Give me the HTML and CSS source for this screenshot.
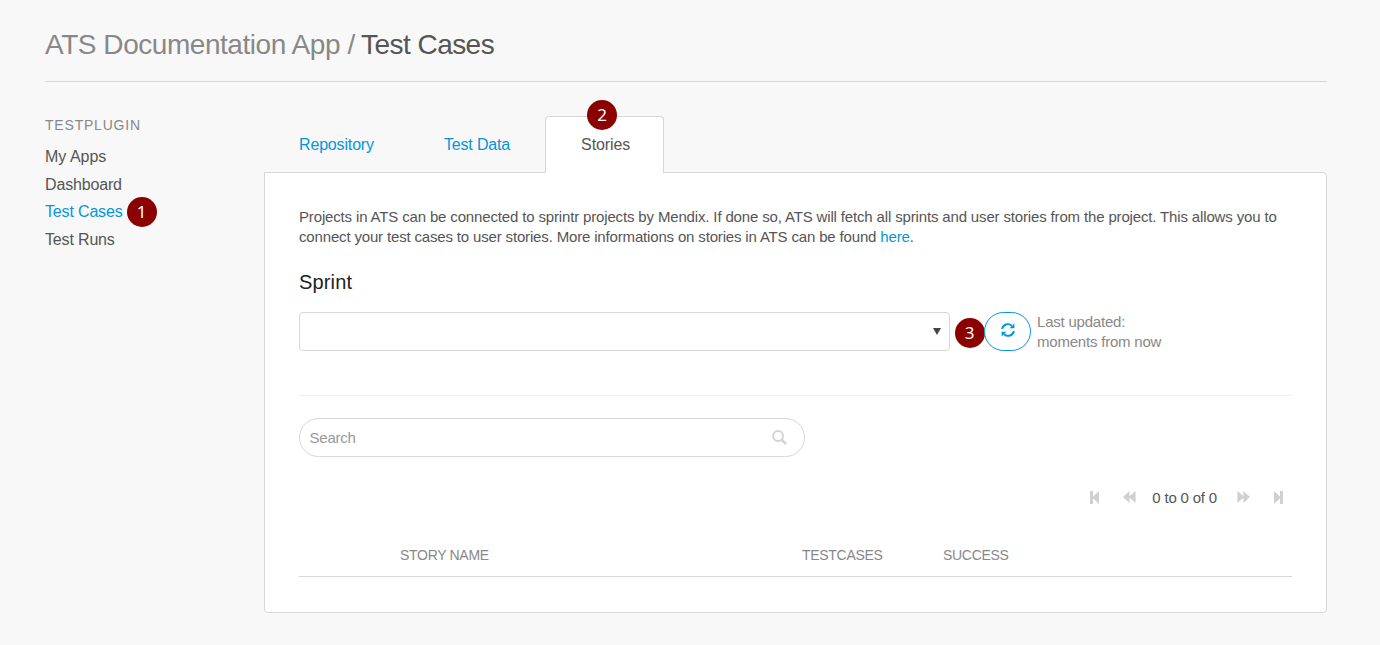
FILE: index.html
```html
<!DOCTYPE html>
<html lang="en">
<head>
<meta charset="utf-8">
<title>Test Cases</title>
<link rel="stylesheet" href="styles.css">
</head>
<body>
<header class="page-header"><h1><span class="app-name">ATS Documentation App /</span> <span class="page-name">Test Cases</span></h1></header>
<div class="layout">
  <nav class="sidebar">
    <h2>TESTPLUGIN</h2>
    <ul>
      <li><a class="wide">My Apps</a></li>
      <li><a>Dashboard</a></li>
      <li class="active"><a>Test Cases</a><span class="badge">1</span></li>
      <li><a>Test Runs</a></li>
    </ul>
  </nav>
  <main class="content">
    <div class="tabs">
      <a class="tab">Repository</a>
      <a class="tab">Test Data</a>
      <a class="tab current">Stories<span class="badge badge-tab">2</span></a>
    </div>
    <section class="panel">
      <p class="intro">Projects in ATS can be connected to sprintr projects by Mendix. If done so, ATS will fetch all sprints and user stories from the project. This allows you to<br><span>connect your test cases to user stories. More informations on stories in ATS can be found <a>here</a>.</span></p>
      <h3>Sprint</h3>
      <div class="sprint-row">
        <div class="select"><svg width="8" height="7" viewBox="0 0 8 7"><path d="M0 0H8L4 7Z" fill="#444"/></svg></div>
        <span class="badge">3</span>
        <button class="refresh"><svg width="14" height="14" viewBox="0 0 14 14"><g fill="none" stroke="#0595db" stroke-width="1.9"><path d="M1.1 6A5.8 5.8 0 0 1 10.8 2.8"/><path d="M12.9 8A5.8 5.8 0 0 1 3.2 11.2"/></g><path d="M13.4 0.4V5.3H8.5ZM.6 13.6V8.7H5.5Z" fill="#0595db"/></svg></button>
        <div class="updated">Last updated:<br>moments from now</div>
      </div>
      <hr>
      <div class="search"><span>Search</span><svg width="15" height="15" viewBox="0 0 15 15" fill="none" stroke="#d3d3d3"><circle cx="6.1" cy="6" r="4.9" stroke-width="2"/><path d="M9.6 9.6L14 14" stroke-width="2.6"/></svg></div>
      <div class="pager">
        <svg width="9" height="13" viewBox="0 0 9 13"><path d="M0 0H3V5.8L9 0V13L3 7.2V13H0Z"/></svg>
        <svg class="rew" width="13" height="12" viewBox="0 0 13 12"><path d="M0 6L6.5 0V5.2L12.6 0V12L6.5 6.8V12Z"/></svg>
        <span>0 to 0 of 0</span>
        <svg class="fwd" width="13" height="12" viewBox="0 0 13 12"><path d="M13 6L6.5 0V5.2L.4 0V12L6.5 6.8V12Z"/></svg>
        <svg width="9" height="13" viewBox="0 0 9 13"><path d="M9 0H6V5.8L0 0V13L6 7.2V13H9Z"/></svg>
      </div>
      <div class="thead"><span></span><span>STORY NAME</span><span>TESTCASES</span><span>SUCCESS</span></div>
    </section>
  </main>
</div>
</body>
</html>
```
FILE: styles.css
```css
* { box-sizing: border-box; }
body { margin: 0; padding: 0 53px 0 45px; background: #f8f8f8; color: #555; font: 15px/20px "Liberation Sans", Arial, sans-serif; }
h1, h2, h3, p, ul { margin: 0; padding: 0; font-weight: normal; }
svg { display: block; }
.page-header { height: 82px; padding-top: 29px; border-bottom: 1px solid #d7d7d7; }
h1 { font-size: 28px; line-height: 32px; white-space: nowrap; letter-spacing: -0.45px; }
.app-name { color: #888; }
.page-name { color: #555; margin-left: -1px; letter-spacing: -0.55px; }
.layout { display: flex; }
.sidebar { width: 219px; padding-top: 33px; }
.sidebar h2 { font-size: 14px; line-height: 20px; letter-spacing: 0.8px; color: #888; margin-bottom: 8px; }
.sidebar ul { list-style: none; }
.sidebar li { height: 27.7px; line-height: 28px; font-size: 16px; letter-spacing: -0.16px; display: flex; align-items: center; gap: 4px; }
.sidebar .wide { letter-spacing: 0; }
.active a, .intro a { color: #0595db; }
.badge { width: 30px; height: 30px; border-radius: 50%; background: #8b0000; color: #fff; font: 17px/29px "Noto Sans", sans-serif; letter-spacing: 0; text-align: center; flex: none; }
.content { width: 1063px; padding-top: 34px; }
.tabs { display: flex; height: 57px; position: relative; z-index: 1; margin-bottom: -1px; }
.tab { padding: 19px 35px; line-height: 20px; font-size: 16px; letter-spacing: -0.16px; color: #0595db; }
.current { position: relative; width: 119px; height: 57px; padding: 18px 35px; background: #fff; border: 1px solid #d7d7d7; border-bottom: 0; border-radius: 4px 4px 0 0; color: #555; letter-spacing: -0.08px; }
.badge-tab { position: absolute; left: 41px; top: -17px; }
.panel { height: 441px; padding: 34px; background: #fff; border: 1px solid #d7d7d7; border-radius: 0 4px 4px 4px; }
.intro { white-space: nowrap; letter-spacing: -0.152px; }
.intro span { letter-spacing: -0.162px; }
h3 { font-size: 20px; line-height: 26px; color: #222; margin-top: 22px; letter-spacing: 0.15px; }
.sprint-row { display: flex; margin-top: 17px; height: 39px; }
.select { width: 651px; border: 1px solid #d7d7d7; border-radius: 4px; display: flex; justify-content: flex-end; padding: 15px 8px; margin-right: 4.6px; }
.sprint-row .badge { margin-top: 6px; }
.refresh { width: 47px; height: 39px; padding: 0 0 3px; display: flex; justify-content: center; align-items: center; border: 1px solid #0595db; border-radius: 20px; background: #fff; margin-left: -0.6px; }
.updated { margin-left: 6px; color: #888; white-space: nowrap; letter-spacing: -0.21px; }
hr { border: 0; border-top: 1px solid #eee; margin: 44px 0 22px; }
.search { width: 506px; height: 39px; border: 1px solid #d7d7d7; border-radius: 20px; display: flex; align-items: center; justify-content: space-between; padding: 0 17px 0 9.5px; color: #999; letter-spacing: -0.22px; }
.pager { display: flex; justify-content: flex-end; align-items: center; height: 20px; margin: 31px 9px 0 0; color: #555; fill: #d0d0d0; letter-spacing: -0.18px; }
.rew { margin: 0 16px 0 24px; }
.fwd { margin: 0 24px 0 20px; }
.pager svg { transform: translateY(-1px); }
.thead { display: grid; grid-template-columns: 101px 402px 141px 1fr; height: 40px; margin-top: 29px; padding-top: 8px; border-bottom: 1px solid #d7d7d7; font-size: 14px; line-height: 20px; letter-spacing: -0.3px; color: #888; }
```
